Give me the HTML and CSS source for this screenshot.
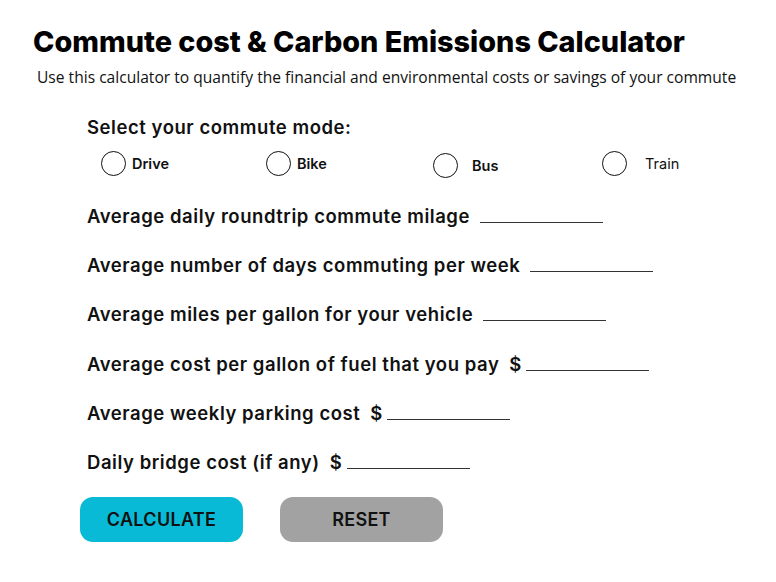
FILE: index.html
```html
<!DOCTYPE html>
<html>
<head>
<meta charset="utf-8">
<link rel="stylesheet" href="styles.css">
</head>
<body>
<div class="page">
  <h1 class="title">Commute cost &amp; Carbon Emissions Calculator</h1>
  <p class="subtitle">Use this calculator to quantify the financial and environmental costs or savings of your commute</p>
  <div class="form">
    <div class="mode-label">Select your commute mode:</div>
    <div class="modes">
      <label class="mode"><span class="radio"></span><span class="mode-text">Drive</span></label>
      <label class="mode"><span class="radio"></span><span class="mode-text">Bike</span></label>
      <label class="mode mode-low"><span class="radio"></span><span class="mode-text mode-bus">Bus</span></label>
      <label class="mode"><span class="radio"></span><span class="mode-text mode-train">Train</span></label>
    </div>
    <div class="row"><span class="label">Average daily roundtrip commute milage</span><span class="blank"></span></div>
    <div class="row"><span class="label">Average number of days commuting per week</span><span class="blank"></span></div>
    <div class="row"><span class="label">Average miles per gallon for your vehicle</span><span class="blank"></span></div>
    <div class="row"><span class="label">Average cost per gallon of fuel that you pay</span><span class="dollar">$</span><span class="blank"></span></div>
    <div class="row"><span class="label">Average weekly parking cost</span><span class="dollar">$</span><span class="blank"></span></div>
    <div class="row"><span class="label">Daily bridge cost (if any)</span><span class="dollar">$</span><span class="blank"></span></div>
    <div class="buttons">
      <button class="btn btn-calc">CALCULATE</button>
      <button class="btn btn-reset">RESET</button>
    </div>
  </div>
</div>
</body>
</html>
```

FILE: styles.css
```css
* { box-sizing: border-box; }
body {
  margin: 0;
  background: #fff;
  color: #111;
  font-family: "Inter", "Noto Sans", sans-serif;
}
.page {
  padding: 24px 0 0 33px;
}
.title {
  margin: 0;
  font-family: "Inter", sans-serif;
  font-weight: 800;
  font-size: 28.8px;
  line-height: 36px;
  color: #000;
}
.subtitle {
  margin: 7px 0 0 4px;
  font-family: "Open Sans", "Noto Sans", sans-serif;
  font-size: 15.6px;
  line-height: 20px;
  color: #111;
}
.form {
  padding-left: 54px;
  margin-top: 28px;
}
.mode-label {
  font-size: 18.5px;
  font-weight: 600;
  line-height: 24px;
  color: #111;
  letter-spacing: 0.55px;
}
.modes {
  display: grid;
  grid-template-columns: 165px 167px 169px auto;
  margin: 10px 0 0 14px;
  height: 28px;
}
.mode {
  display: flex;
  align-items: center;
  gap: 6px;
}
.mode-low { padding-top: 4px; }
.radio {
  width: 25px;
  height: 25px;
  border: 1.5px solid #111;
  border-radius: 50%;
  flex: none;
}
.mode-text {
  font-family: "Inter", sans-serif;
  font-weight: 600;
  font-size: 14.5px;
  color: #111;
}
.mode-bus { margin-left: 8px; }
.mode-train { margin-left: 12px; font-weight: 400; }
.row {
  display: flex;
  align-items: baseline;
  height: 49.2px;
  padding-top: 19px;
}
.modes + .row { margin-top: 8px; }
.label {
  font-size: 18.5px;
  font-weight: 600;
  line-height: 24px;
  color: #111;
  letter-spacing: 0.55px;
  margin-right: 10px;
}
.dollar {
  font-size: 18.5px;
  font-weight: 600;
  margin-right: 5px;
}
.blank {
  display: inline-block;
  width: 123px;
  border-bottom: 1.5px solid #333;
  height: 1px;
}
.buttons {
  display: flex;
  gap: 37px;
  margin: 17px 0 0 -7px;
}
.btn {
  width: 163px;
  height: 45px;
  border: none;
  border-radius: 13px;
  font-family: "Inter", sans-serif;
  font-weight: 600;
  font-size: 18px;
  letter-spacing: 0.3px;
  color: #111;
  padding: 0;
}
.btn-calc { background: #08bad5; }
.btn-reset { background: #a2a2a2; }
```
